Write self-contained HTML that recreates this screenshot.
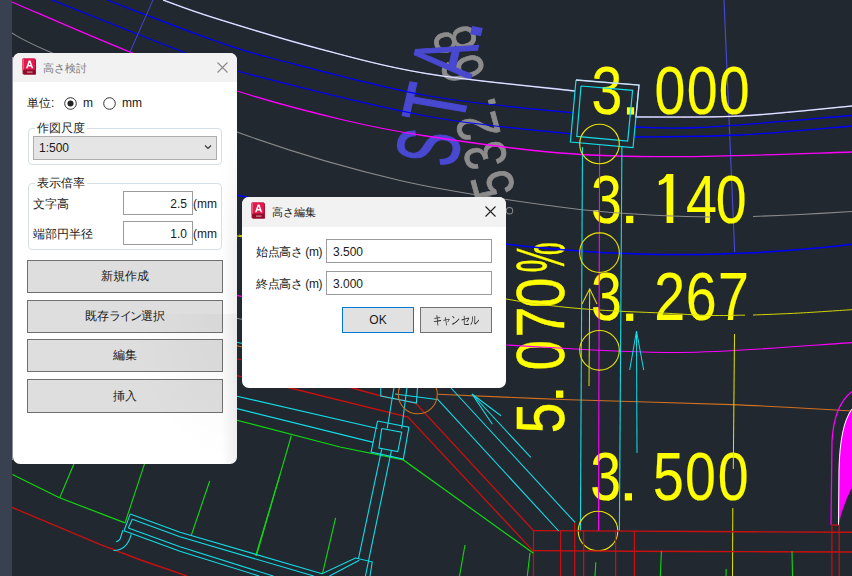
<!DOCTYPE html>
<html><head><meta charset="utf-8">
<style>
html,body{margin:0;padding:0;width:852px;height:576px;overflow:hidden;background:#212830;font-family:"Liberation Sans",sans-serif;}
#bg{position:absolute;left:0;top:0;}
#strip{position:absolute;left:0;top:0;width:12px;height:576px;background:#394150;}
.dlg{position:absolute;background:#fff;border-radius:7px;overflow:hidden;}
.tb{position:absolute;left:0;top:0;right:0;background:#f2f2f2;}
.icon{position:absolute;width:15px;height:17px;}
.icon svg{display:block;}
.icon span{position:absolute;left:0;right:0;top:0;text-align:center;color:#fff;font:bold 10px "Liberation Sans",sans-serif;line-height:11px;}
.icon i{position:absolute;left:3px;right:3px;bottom:2px;height:2px;background:#f0b0b0;}
.t{position:absolute;font-size:12px;color:#1a1a1a;white-space:nowrap;line-height:14px;}
.x{position:absolute;}
.grp{position:absolute;border:1px solid #d5dfe8;border-radius:4px;}
.grp .lbl{position:absolute;top:-8px;left:6px;background:#fff;padding:0 2px;font-size:12px;color:#1a1a1a;line-height:14px;}
.tbx{position:absolute;border:1px solid #9c9c9c;background:#fff;box-sizing:border-box;}
.btn{position:absolute;border:1px solid #707070;background:#dedede;box-sizing:border-box;text-align:center;font-size:12px;color:#1a1a1a;}
</style></head><body>
<div id="strip"></div>
<div style="position:absolute;left:12px;top:57px;width:1px;height:403px;background:#8a8f98;"></div>
<svg id="bg" width="852" height="576" viewBox="0 0 852 576" font-family="Liberation Sans, sans-serif">
<line x1="724" y1="0" x2="734.7" y2="252" stroke="#4a4ad8" stroke-width="1.1"/>
<text transform="translate(591.59 113.60) scale(0.810 1)" font-size="68.5" fill="#ffff00" stroke="#ffff00" stroke-width="0.15">3</text>
<text transform="translate(654.54 113.60) scale(0.810 1)" font-size="68.5" fill="#ffff00" stroke="#ffff00" stroke-width="0.15">0</text>
<text transform="translate(686.84 113.60) scale(0.810 1)" font-size="68.5" fill="#ffff00" stroke="#ffff00" stroke-width="0.15">0</text>
<text transform="translate(718.84 113.60) scale(0.810 1)" font-size="68.5" fill="#ffff00" stroke="#ffff00" stroke-width="0.15">0</text>
<rect x="626.9" y="107.3" width="7.2" height="7.3" fill="#ffff00"/>
<text transform="translate(590.99 222.50) scale(0.810 1)" font-size="68.5" fill="#ffff00" stroke="#ffff00" stroke-width="0.15">3</text>
<text transform="translate(685.92 222.50) scale(0.810 1)" font-size="68.5" fill="#ffff00" stroke="#ffff00" stroke-width="0.15">4</text>
<text transform="translate(715.64 222.50) scale(0.810 1)" font-size="68.5" fill="#ffff00" stroke="#ffff00" stroke-width="0.15">0</text>
<rect x="626.1" y="215.8" width="7.2" height="7.3" fill="#ffff00"/>
<text transform="translate(590.99 320.40) scale(0.810 1)" font-size="68.5" fill="#ffff00" stroke="#ffff00" stroke-width="0.15">3</text>
<text transform="translate(654.13 320.40) scale(0.810 1)" font-size="68.5" fill="#ffff00" stroke="#ffff00" stroke-width="0.15">2</text>
<text transform="translate(685.77 320.40) scale(0.810 1)" font-size="68.5" fill="#ffff00" stroke="#ffff00" stroke-width="0.15">6</text>
<text transform="translate(718.07 320.40) scale(0.810 1)" font-size="68.5" fill="#ffff00" stroke="#ffff00" stroke-width="0.15">7</text>
<rect x="626.1" y="313.6" width="7.2" height="7.3" fill="#ffff00"/>
<text transform="translate(590.19 499.50) scale(0.810 1)" font-size="68.5" fill="#ffff00" stroke="#ffff00" stroke-width="0.15">3</text>
<text transform="translate(652.88 499.50) scale(0.810 1)" font-size="68.5" fill="#ffff00" stroke="#ffff00" stroke-width="0.15">5</text>
<text transform="translate(684.94 499.50) scale(0.810 1)" font-size="68.5" fill="#ffff00" stroke="#ffff00" stroke-width="0.15">0</text>
<text transform="translate(717.84 499.50) scale(0.810 1)" font-size="68.5" fill="#ffff00" stroke="#ffff00" stroke-width="0.15">0</text>
<rect x="624.8" y="493.2" width="7.2" height="7.3" fill="#ffff00"/>
<path d="M666.6 174 L673.3 174 L673.3 223 L666.6 223 L666.6 181.5 Q663.5 184.5 658.8 185.2 L658.8 181 Q664.5 179 666.6 174 Z" fill="#ffff00"/>
<rect x="556" y="390.5" width="7.3" height="7.3" fill="#ffff00"/>
<text transform="translate(564 433.2) rotate(-90) scale(0.806 1)" font-size="68" fill="#ffff00" stroke="#ffff00" stroke-width="0.5">5</text>
<text transform="translate(564 370.6) rotate(-90) scale(0.806 1)" font-size="68" fill="#ffff00" stroke="#ffff00" stroke-width="0.5">0</text>
<text transform="translate(564 337.3) rotate(-90) scale(0.806 1)" font-size="68" fill="#ffff00" stroke="#ffff00" stroke-width="0.5">7</text>
<text transform="translate(564 308.1) rotate(-90) scale(0.806 1)" font-size="68" fill="#ffff00" stroke="#ffff00" stroke-width="0.5">0</text>
<text transform="translate(564 272.6) rotate(-90) scale(0.500 1)" font-size="68" fill="#ffff00" stroke="#ffff00" stroke-width="0.5">%</text>
<text transform="translate(515.8 191.5) rotate(-105) scale(0.780 1)" font-size="59" fill="#8c8c8c" stroke="#8c8c8c" stroke-width="0.8">5</text>
<text transform="translate(508.3 162.6) rotate(-105) scale(0.780 1)" font-size="59" fill="#8c8c8c" stroke="#8c8c8c" stroke-width="0.8">3</text>
<text transform="translate(500.7 133.7) rotate(-105) scale(0.780 1)" font-size="59" fill="#8c8c8c" stroke="#8c8c8c" stroke-width="0.8">2</text>
<text transform="translate(485.7 75.8) rotate(-105) scale(0.780 1)" font-size="59" fill="#8c8c8c" stroke="#8c8c8c" stroke-width="0.8">6</text>
<text transform="translate(478.1 46.9) rotate(-105) scale(0.780 1)" font-size="59" fill="#8c8c8c" stroke="#8c8c8c" stroke-width="0.8">8</text>
<text transform="translate(496.5 106.9) rotate(-105) scale(0.780 1)" font-size="59" fill="#8c8c8c" stroke="#8c8c8c" stroke-width="0.8">.</text>
<text transform="matrix(0.1305 -0.5649 0.9850 0.1700 454.4 169.1)" font-size="87.8" fill="#4848d0" stroke="#4848d0" stroke-width="1.5">S</text>
<text transform="matrix(0.1575 -0.6818 0.9850 0.1700 461.6 127.2)" font-size="87.8" fill="#4848d0" stroke="#4848d0" stroke-width="1.5">T</text>
<text transform="matrix(0.1350 -0.5844 0.9850 0.1700 470.5 79.6)" font-size="87.8" fill="#4848d0" stroke="#4848d0" stroke-width="1.5">A</text>
<text transform="matrix(0.1913 -0.8279 0.9850 0.1700 478.7 42.1)" font-size="87.8" fill="#4848d0" stroke="#4848d0" stroke-width="1.5">.</text>
<path d="M163.0 0.0 C171.3 2.9 186.8 9.3 213.0 17.5 C239.2 25.7 284.5 39.7 320.0 49.0 C355.5 58.3 383.5 66.5 426.0 73.5 C468.5 80.5 550.2 88.1 575.0 91.0" stroke="#9090d8" stroke-width="1.53" fill="none" />
<path d="M163.0 0.0 C171.3 2.9 186.8 9.3 213.0 17.5 C239.2 25.7 284.5 39.7 320.0 49.0 C355.5 58.3 383.5 66.5 426.0 73.5 C468.5 80.5 550.2 88.1 575.0 91.0" stroke="#f4f4ff" stroke-width="0.94" fill="none" />
<path d="M635.0 117.0 C652.5 116.8 703.8 117.8 740.0 116.0 C776.2 114.2 833.3 107.7 852.0 106.0" stroke="#9090d8" stroke-width="1.53" fill="none" />
<path d="M635.0 117.0 C652.5 116.8 703.8 117.8 740.0 116.0 C776.2 114.2 833.3 107.7 852.0 106.0" stroke="#f4f4ff" stroke-width="0.94" fill="none" />
<path d="M52.0 0.0 C73.8 8.7 152.2 40.2 183.0 52.0 C213.8 63.8 196.5 60.3 237.0 71.0 C277.5 81.7 370.3 105.5 426.0 116.0 C481.7 126.5 546.8 131.0 571.0 134.0" stroke="#0000ff" stroke-width="1.27" fill="none" />
<path d="M107.0 0.0 C124.7 6.7 185.0 30.2 213.0 40.0 C241.0 49.8 239.5 49.8 275.0 59.0 C310.5 68.2 376.3 86.5 426.0 95.5 C475.7 104.5 548.5 110.1 573.0 113.0" stroke="#0000ff" stroke-width="1.27" fill="none" />
<path d="M633.0 127.0 C644.2 127.1 663.5 129.4 700.0 127.5 C736.5 125.6 826.7 117.5 852.0 115.5" stroke="#0000ff" stroke-width="1.27" fill="none" />
<path d="M633.0 137.0 C650.8 136.7 703.5 136.8 740.0 135.0 C776.5 133.2 833.3 127.5 852.0 126.0" stroke="#0000ff" stroke-width="1.27" fill="none" />
<path d="M12.0 2.0 C31.7 10.3 92.5 37.2 130.0 52.0 C167.5 66.8 201.4 79.7 237.0 91.0 C272.6 102.3 312.0 112.5 343.5 120.0 C375.0 127.5 389.9 130.5 426.0 136.0 C462.1 141.5 517.7 149.6 560.0 153.0 C602.3 156.4 631.3 156.9 680.0 156.7 C728.7 156.5 823.3 152.8 852.0 152.0" stroke="#ff00ff" stroke-width="1.27" fill="none" />
<path d="M12.0 33.0 C18.3 36.2 12.5 35.5 50.0 52.0 C87.5 68.5 178.7 110.6 237.0 132.0 C295.3 153.4 346.2 167.9 400.0 180.4 C453.8 192.9 518.3 201.2 560.0 207.0 C601.7 212.8 624.8 213.3 650.0 215.0 C675.2 216.7 700.8 216.7 711.0 217.0" stroke="#8a8a8a" stroke-width="1.02" fill="none" />
<path d="M753.0 216.5 C760.8 216.2 783.5 215.3 800.0 214.5 C816.5 213.7 843.3 212.0 852.0 211.5" stroke="#8a8a8a" stroke-width="1.02" fill="none" />
<circle cx="509.5" cy="210.7" r="3.2" stroke="#8a8a8a" stroke-width="1.02" fill="none"/>
<line x1="153.0" y1="0.0" x2="130.0" y2="52.0" stroke="#4a4ad8" stroke-width="0.94"/>
<path d="M230.0 194.0 L500.0 243.3 L520.0 245.7 L540.0 247.8 L560.0 249.6 L580.0 251.1 L600.0 252.4 L620.0 253.3 L640.0 254.0 L660.0 254.5 L680.0 254.6 L700.0 254.5 L720.0 254.0 L740.0 253.3 L760.0 252.4 L780.0 251.1 L800.0 249.6 L820.0 247.8 L840.0 245.7 L852.0 244.3" stroke="#0000ff" stroke-width="1.53" fill="none" />
<path d="M239.0 235.0 C283.5 245.7 432.5 285.8 506.0 299.0 C579.5 312.2 640.2 311.3 680.0 314.0 C719.8 316.7 734.2 315.0 745.0 315.2" stroke="#e0e000" stroke-width="0.94" fill="none" />
<path d="M753.0 315.0 C760.8 314.7 783.5 313.9 800.0 313.0 C816.5 312.1 843.3 310.2 852.0 309.7" stroke="#e0e000" stroke-width="0.94" fill="none" />
<path d="M506.0 345.0 C535.0 346.2 622.3 352.9 680.0 352.5 C737.7 352.1 823.3 344.2 852.0 342.6" stroke="#ff00ff" stroke-width="1.1" fill="none" />
<path d="M438.0 394.3 C460.0 395.2 521.0 398.0 570.0 399.7 C619.0 401.4 685.0 402.8 732.0 404.6 C779.0 406.5 832.0 409.8 852.0 410.8" stroke="#d07020" stroke-width="1.1" fill="none" />
<line x1="228.0" y1="234.0" x2="250.0" y2="238.5" stroke="#e0e000" stroke-width="1.19"/>
<line x1="228.0" y1="293.6" x2="250.0" y2="298.1" stroke="#ff00ff" stroke-width="1.19"/>
<line x1="228.0" y1="316.5" x2="250.0" y2="321.0" stroke="#8a8a8a" stroke-width="1.19"/>
<line x1="228.0" y1="340.5" x2="250.0" y2="345.0" stroke="#14dce6" stroke-width="1.19"/>
<line x1="228.0" y1="344.0" x2="250.0" y2="348.5" stroke="#d07020" stroke-width="1.19"/>
<line x1="228.0" y1="357.0" x2="250.0" y2="361.5" stroke="#c81010" stroke-width="1.19"/>
<line x1="228.0" y1="373.8" x2="250.0" y2="378.3" stroke="#c81010" stroke-width="1.19"/>
<path d="M576.0 80.0 L639.0 85.0 L633.0 147.7 L570.4 142.0 L576.0 80.0" stroke="#14dce6" stroke-width="1.19" fill="none" />
<path d="M576.0 80.0 L639.0 85.0 L636.0 117.0" stroke="#dcdcf4" stroke-width="1.27" fill="none" />
<path d="M581.0 86.0 L632.6 90.4 L627.7 141.0 L576.8 136.4 L581.0 86.0" stroke="#14dce6" stroke-width="1.19" fill="none" />
<line x1="582.5" y1="147.0" x2="580.4" y2="531.0" stroke="#14dce6" stroke-width="1.1"/>
<line x1="621.9" y1="147.0" x2="619.4" y2="531.0" stroke="#14dce6" stroke-width="1.1"/>
<line x1="599.6" y1="145.0" x2="598.5" y2="531.0" stroke="#ff00ff" stroke-width="1.1"/>
<circle cx="599.5" cy="144.0" r="19.8" stroke="#e8e000" stroke-width="1.1" fill="none"/>
<circle cx="599.5" cy="252.7" r="19.8" stroke="#e8e000" stroke-width="1.1" fill="none"/>
<circle cx="599.5" cy="350.3" r="19.8" stroke="#e8e000" stroke-width="1.1" fill="none"/>
<circle cx="598.0" cy="531.0" r="19.8" stroke="#e8e000" stroke-width="1.1" fill="none"/>
<line x1="589.7" y1="289.0" x2="589.0" y2="386.0" stroke="#e0e000" stroke-width="1.02"/>
<path d="M582.0 304.0 L589.7 289.0 L597.0 304.0" stroke="#e0e000" stroke-width="1.02" fill="none" />
<line x1="636.5" y1="331.0" x2="637.0" y2="453.0" stroke="#14dce6" stroke-width="1.02"/>
<path d="M629.7 370.0 L636.5 331.0 L643.7 370.0" stroke="#14dce6" stroke-width="1.02" fill="none" />
<line x1="734.5" y1="334.0" x2="733.3" y2="469.0" stroke="#e0e000" stroke-width="1.02"/>
<line x1="732.8" y1="508.0" x2="732.5" y2="576.0" stroke="#e0e000" stroke-width="1.02"/>
<path d="M533.5 530.6 C561.2 530.8 646.9 531.2 700.0 531.5 C753.1 531.8 826.7 532.1 852.0 532.2" stroke="#c81010" stroke-width="1.36" fill="none" />
<path d="M533.5 550.6 C561.2 550.8 646.9 551.3 700.0 551.5 C753.1 551.7 826.7 551.9 852.0 552.0" stroke="#c81010" stroke-width="1.36" fill="none" />
<line x1="533.5" y1="530.6" x2="533.5" y2="576.0" stroke="#c81010" stroke-width="1.27"/>
<line x1="560.6" y1="530.6" x2="560.6" y2="576.0" stroke="#c81010" stroke-width="1.27"/>
<line x1="583.6" y1="530.6" x2="583.6" y2="576.0" stroke="#c81010" stroke-width="1.27"/>
<line x1="615.6" y1="530.6" x2="615.6" y2="576.0" stroke="#c81010" stroke-width="1.27"/>
<line x1="634.4" y1="530.6" x2="634.4" y2="576.0" stroke="#c81010" stroke-width="1.27"/>
<line x1="574.7" y1="522.4" x2="574.7" y2="576.0" stroke="#c81010" stroke-width="1.27"/>
<line x1="831.9" y1="525.0" x2="831.9" y2="576.0" stroke="#c81010" stroke-width="1.27"/>
<line x1="839.2" y1="525.0" x2="839.2" y2="576.0" stroke="#c81010" stroke-width="1.27"/>
<line x1="831.9" y1="525.0" x2="839.2" y2="525.0" stroke="#c81010" stroke-width="1.27"/>
<path d="M344.8 386.0 L381.0 396.0 L415.6 403.0 L533.5 530.6" stroke="#c81010" stroke-width="1.36" fill="none" />
<path d="M282.0 386.0 L408.0 417.0 L533.5 551.4" stroke="#c81010" stroke-width="1.36" fill="none" />
<path d="M12.0 507.4 L100.0 544.3 L140.6 560.0 L187.0 576.0" stroke="#c81010" stroke-width="1.36" fill="none" />
<line x1="437.0" y1="398.6" x2="558.7" y2="531.0" stroke="#14dce6" stroke-width="1.1"/>
<line x1="451.0" y1="388.0" x2="575.0" y2="522.4" stroke="#14dce6" stroke-width="1.1"/>
<line x1="472.0" y1="394.0" x2="530.8" y2="457.4" stroke="#14dce6" stroke-width="1.1"/>
<path d="M501.0 415.7 L472.0 394.0 L492.4 424.2" stroke="#14dce6" stroke-width="1.1" fill="none" />
<path d="M236.0 420.0 L340.0 447.0 L403.3 459.9 L533.5 553.3" stroke="#10d810" stroke-width="1.19" fill="none" />
<path d="M12.5 474.5 L59.0 497.5 L125.0 522.9" stroke="#10d810" stroke-width="1.19" fill="none" />
<line x1="74.0" y1="463.7" x2="59.8" y2="497.5" stroke="#10d810" stroke-width="1.1"/>
<line x1="144.6" y1="463.7" x2="125.0" y2="522.9" stroke="#10d810" stroke-width="1.1"/>
<line x1="209.7" y1="481.0" x2="191.4" y2="535.0" stroke="#10d810" stroke-width="1.1"/>
<line x1="280.0" y1="474.5" x2="255.7" y2="555.6" stroke="#10d810" stroke-width="1.1"/>
<line x1="291.4" y1="435.5" x2="256.4" y2="555.8" stroke="#10d810" stroke-width="1.1"/>
<line x1="335.6" y1="517.9" x2="322.6" y2="573.2" stroke="#10d810" stroke-width="1.1"/>
<line x1="465.0" y1="545.0" x2="459.5" y2="576.0" stroke="#10d810" stroke-width="1.1"/>
<line x1="530.0" y1="552.8" x2="527.3" y2="576.0" stroke="#10d810" stroke-width="1.1"/>
<line x1="595.8" y1="562.3" x2="595.0" y2="576.0" stroke="#10d810" stroke-width="1.1"/>
<line x1="661.4" y1="551.3" x2="660.3" y2="576.0" stroke="#10d810" stroke-width="1.1"/>
<line x1="792.0" y1="551.3" x2="792.5" y2="576.0" stroke="#10d810" stroke-width="1.1"/>
<line x1="726.2" y1="569.0" x2="726.0" y2="576.0" stroke="#10d810" stroke-width="1.1"/>
<line x1="236.0" y1="396.0" x2="377.5" y2="428.5" stroke="#14dce6" stroke-width="1.1"/>
<line x1="236.0" y1="408.4" x2="373.3" y2="442.4" stroke="#14dce6" stroke-width="1.1"/>
<path d="M377.5 421.0 L408.9 427.1 L403.3 459.0 L371.1 452.1 L377.5 421.0" stroke="#14dce6" stroke-width="1.1" fill="none" />
<path d="M381.7 428.5 L401.7 432.1 L397.8 451.6 L378.9 448.0 L381.7 428.5" stroke="#14dce6" stroke-width="1.1" fill="none" />
<line x1="393.9" y1="388.0" x2="387.2" y2="428.5" stroke="#14dce6" stroke-width="1.1"/>
<line x1="406.9" y1="388.0" x2="401.7" y2="428.5" stroke="#14dce6" stroke-width="1.1"/>
<line x1="381.7" y1="449.3" x2="358.5" y2="558.7" stroke="#14dce6" stroke-width="1.1"/>
<line x1="391.4" y1="450.7" x2="365.4" y2="576.0" stroke="#14dce6" stroke-width="1.1"/>
<path d="M380.8 388.0 L380.8 396.0 L416.4 403.0 L417.5 388.0" stroke="#14dce6" stroke-width="1.1" fill="none" />
<line x1="395.0" y1="394.0" x2="437.0" y2="399.5" stroke="#14dce6" stroke-width="1.1"/>
<circle cx="417.8" cy="394.3" r="19.5" stroke="#d07020" stroke-width="1.1" fill="none"/>
<path d="M130.2 514.1 L180.0 532.2 L322.0 573.7 L355.4 558.0 L372.2 561.8 L370.0 576.0" stroke="#14dce6" stroke-width="1.1" fill="none" />
<path d="M132.3 519.3 L180.0 536.8 L313.8 576.0" stroke="#14dce6" stroke-width="1.1" fill="none" />
<path d="M128.3 528.1 L180.0 546.8 L273.3 576.0" stroke="#14dce6" stroke-width="1.1" fill="none" />
<path d="M124.0 530.7 L180.0 551.2 L259.2 576.0" stroke="#14dce6" stroke-width="1.1" fill="none" />
<path d="M130.2 514.1 L124.0 530.7" stroke="#14dce6" stroke-width="1.1" fill="none" />
<path d="M132.3 519.3 L128.3 528.1" stroke="#14dce6" stroke-width="1.1" fill="none" />
<path d="M329.5 576.0 L359.3 560.2" stroke="#14dce6" stroke-width="1.1" fill="none" />
<path d="M122.9 530.2 L120.3 538.5 Q118.5 541.7 116.1 541.7" stroke="#14dce6" stroke-width="1.1" fill="none" />
<path d="M131.25 534.4 Q127 550.5 113.5 550.5" stroke="#14dce6" stroke-width="1.1" fill="none" />
<path d="M831 524.7 L832 441.4 Q834 405 852 391.4" stroke="#ff00ff" stroke-width="1.27" fill="none" />
<path d="M838.5 524.7 L839 470 Q840 425 852 409 L852 487 Q843 505 839.5 520 Z" stroke="#ff00ff" stroke-width="0.42" fill="#ff00ff" />
<path d="M838.5 524.7 L839 470 Q840 425 852 409" stroke="#ffffff" stroke-width="1.02" fill="none" />
</svg>

<div class="dlg" id="d1" style="left:13px;top:53px;width:224px;height:411px;">
  <div class="tb" style="height:29px;"></div>
  <div class="icon" style="left:9px;top:5px;"><svg width="15" height="17" viewBox="0 0 15 17"><path d="M0.5 1.5 Q0.5 0.5 1.5 0.5 L12.5 0.5 L14 1.8 L14 16.5 L1.5 16.5 L0.5 15.5 Z" fill="#b3103a"/><path d="M0.5 1.5 Q0.5 0.5 1.5 0.5 L12.8 0.5 L12.8 11.8 L0.5 11.8 Z" fill="#e3184c"/><path d="M0.5 1 L2 0.5 L2 11.8 L0.5 11.8 Z" fill="#ea5a7c"/><path d="M1.5 11.8 L13 11.8 L13.5 16.5 L1.8 16.5 Z" fill="#8e0c2a"/><path fill-rule="evenodd" d="M4 10.3 L6.7 2.6 L8.5 2.6 L11.2 10.3 L9.6 10.3 L9 8.5 L6.2 8.5 L5.6 10.3 Z M6.7 7.1 L8.5 7.1 L7.6 4.4 Z" fill="#fff"/><rect x="5" y="13.5" width="5.5" height="1.2" fill="#d88a9c"/></svg></div>
  <div class="t" style="left:30px;top:8px;color:#7a7a7a;font-size:10.6px;">高さ検討</div>
  <svg class="x" style="left:204px;top:9px;" width="11" height="11"><path d="M0.5 0.5 L10.5 10.5 M10.5 0.5 L0.5 10.5" stroke="#8a8a8a" stroke-width="1.1"/></svg>
  <div class="t" style="left:14px;top:43px;">単位:</div>
  <svg class="x" style="left:51px;top:44px;" width="13" height="13"><circle cx="6.5" cy="6.5" r="5.8" fill="#fff" stroke="#333" stroke-width="1"/><circle cx="6.5" cy="6.5" r="3" fill="#222"/></svg>
  <div class="t" style="left:70px;top:43px;">m</div>
  <svg class="x" style="left:90px;top:44px;" width="13" height="13"><circle cx="6.5" cy="6.5" r="5.8" fill="#fff" stroke="#333" stroke-width="1"/></svg>
  <div class="t" style="left:109px;top:43px;">mm</div>

  <div class="grp" style="left:15px;top:75px;width:192px;height:35px;"><div class="lbl">作図尺度</div></div>
  <div class="tbx" style="left:20px;top:83px;width:184px;height:24px;background:#e5e5e5;border-color:#adadad;"></div>
  <div class="t" style="left:26px;top:88px;">1:500</div>
  <svg class="x" style="left:191px;top:91px;" width="8" height="6"><path d="M1 1.5 L4 4.5 L7 1.5" stroke="#333" stroke-width="1.1" fill="none"/></svg>

  <div class="grp" style="left:15px;top:130px;width:192px;height:65px;"><div class="lbl">表示倍率</div></div>
  <div class="t" style="left:20px;top:144px;">文字高</div>
  <div class="tbx" style="left:110px;top:138px;width:70px;height:24px;"></div>
  <div class="t" style="left:110px;top:144px;width:64px;text-align:right;">2.5</div>
  <div class="t" style="left:180px;top:144px;">(mm</div>
  <div class="t" style="left:20px;top:174px;">端部円半径</div>
  <div class="tbx" style="left:110px;top:168px;width:70px;height:24px;"></div>
  <div class="t" style="left:110px;top:174px;width:64px;text-align:right;">1.0</div>
  <div class="t" style="left:180px;top:174px;">(mm</div>

  <div class="btn" style="left:14px;top:207px;width:196px;height:33px;line-height:31px;">新規作成</div>
  <div class="btn" style="left:14px;top:247px;width:196px;height:33px;line-height:31px;">既存<span style="letter-spacing:-1.2px;">ライン</span>選択</div>
  <div class="btn" style="left:14px;top:286px;width:196px;height:33px;line-height:31px;">編集</div>
  <div class="btn" style="left:14px;top:326px;width:196px;height:34px;line-height:32px;">挿入</div>
  <div style="position:absolute;right:0;top:80px;width:16px;bottom:0;background:linear-gradient(to right,rgba(0,0,0,0),rgba(0,0,0,0.06));-webkit-mask-image:linear-gradient(to bottom,transparent,#000 35%);"></div>
  <div style="position:absolute;right:0;bottom:0;width:110px;height:150px;background:radial-gradient(ellipse at 100% 0%,rgba(0,0,0,0.035),rgba(0,0,0,0) 70%);"></div>
</div>

<div class="dlg" id="d2" style="left:242px;top:197px;width:264px;height:191px;">
  <div class="tb" style="height:30px;"></div>
  <div class="icon" style="left:9px;top:5px;"><svg width="15" height="17" viewBox="0 0 15 17"><path d="M0.5 1.5 Q0.5 0.5 1.5 0.5 L12.5 0.5 L14 1.8 L14 16.5 L1.5 16.5 L0.5 15.5 Z" fill="#b3103a"/><path d="M0.5 1.5 Q0.5 0.5 1.5 0.5 L12.8 0.5 L12.8 11.8 L0.5 11.8 Z" fill="#e3184c"/><path d="M0.5 1 L2 0.5 L2 11.8 L0.5 11.8 Z" fill="#ea5a7c"/><path d="M1.5 11.8 L13 11.8 L13.5 16.5 L1.8 16.5 Z" fill="#8e0c2a"/><path fill-rule="evenodd" d="M4 10.3 L6.7 2.6 L8.5 2.6 L11.2 10.3 L9.6 10.3 L9 8.5 L6.2 8.5 L5.6 10.3 Z M6.7 7.1 L8.5 7.1 L7.6 4.4 Z" fill="#fff"/><rect x="5" y="13.5" width="5.5" height="1.2" fill="#d88a9c"/></svg></div>
  <div class="t" style="left:30px;top:8px;font-size:10.6px;">高さ編集</div>
  <svg class="x" style="left:243px;top:9px;" width="11" height="11"><path d="M0.5 0.5 L10.5 10.5 M10.5 0.5 L0.5 10.5" stroke="#222" stroke-width="1.1"/></svg>
  <div class="t" style="left:14px;top:48px;letter-spacing:-0.4px;">始点高さ (m)</div>
  <div class="tbx" style="left:84px;top:42px;width:166px;height:24px;"></div>
  <div class="t" style="left:91px;top:48px;">3.500</div>
  <div class="t" style="left:14px;top:80px;letter-spacing:-0.4px;">終点高さ (m)</div>
  <div class="tbx" style="left:84px;top:74px;width:166px;height:24px;"></div>
  <div class="t" style="left:91px;top:80px;">3.000</div>
  <div class="btn" style="left:100px;top:110px;width:72px;height:26px;line-height:24px;border-color:#0078d7;background:#e1e1e1;">OK</div>
  <div class="btn" style="left:178px;top:110px;width:72px;height:26px;line-height:24px;background:#e1e1e1;"><span style="display:inline-block;transform:scaleX(0.76);">キャンセル</span></div>
</div>
</body></html>
